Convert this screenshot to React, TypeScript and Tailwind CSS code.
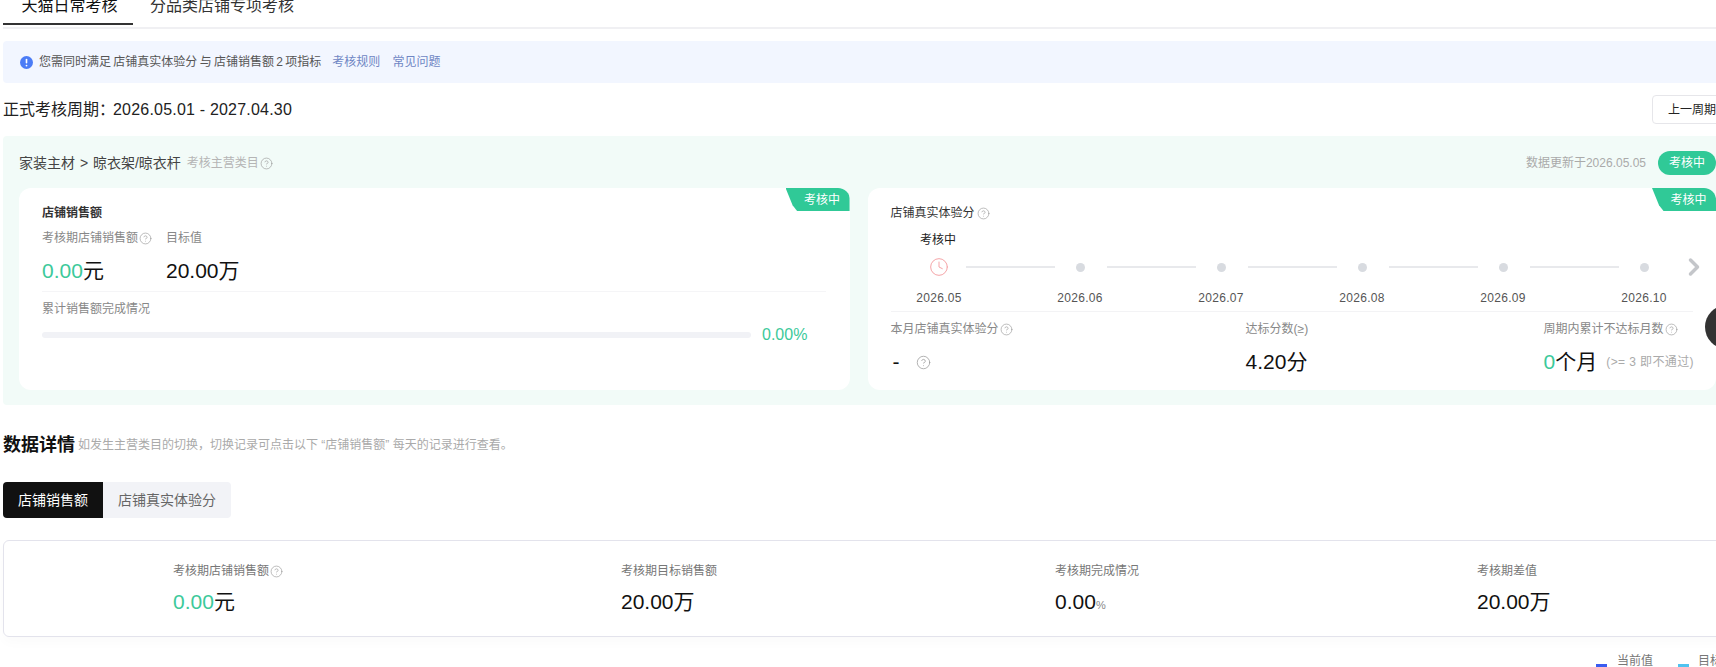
import { CircleHelp, Clock, ChevronRight } from "lucide-react";

const font = { fontFamily: '"Liberation Sans","Noto Sans CJK SC",sans-serif' };

function Help({ size = 13 }: { size?: number }) {
  return <CircleHelp size={size} strokeWidth={1.2} className="inline-block text-[#999] shrink-0" />;
}

function Tag() {
  return (
    <div className="absolute right-0 top-0 w-[64px] h-[23px] pl-[9px] flex items-center justify-center bg-[#30c997] text-white text-[12px] rounded-tr-[12px] [clip-path:polygon(0_0,100%_0,100%_100%,18%_100%,11%_75%)]">
      考核中
    </div>
  );
}

const months = ["2026.05", "2026.06", "2026.07", "2026.08", "2026.09", "2026.10"];

const summary = [
  { label: "考核期店铺销售额", help: true, w: "w-[109px]" },
  { label: "考核期目标销售额", w: "w-[95px]" },
  { label: "考核期完成情况", w: "w-[83px]" },
  { label: "考核期差值", w: "w-[72px]" },
];

export default function App() {
  return (
    <div className="w-[1716px] h-[667px] overflow-hidden bg-white relative" style={font}>
      <div className="w-[1732px] pl-[3px] text-[#111]">
        {/* top tabs */}
        <div className="h-[29px] border-b-2 border-[#f0f0f3] flex">
          <div className="w-[130px] h-[29px] border-b-2 border-[#333] flex justify-center text-[16px] leading-[24px] -mt-[6px] box-content">
            <span className="pl-[3px]">天猫日常考核</span>
          </div>
          <div className="ml-[17px] text-[16px] leading-[24px] -mt-[6px] text-[#333]">分品类店铺专项考核</div>
        </div>

        {/* alert */}
        <div className="mt-[12px] h-[42px] bg-[#f2f6ff] rounded-[4px] flex items-center pl-[17px] text-[12px]">
          <svg width="13" height="13" viewBox="0 0 13 13" className="shrink-0">
            <circle cx="6.5" cy="6.5" r="6.5" fill="#4b7cf6" />
            <rect x="5.7" y="2.8" width="1.6" height="4.8" rx="0.8" fill="#fff" />
            <circle cx="6.5" cy="9.6" r="0.9" fill="#fff" />
          </svg>
          <span className="ml-[6px] text-[#555] [word-spacing:-1px]">您需同时满足 店铺真实体验分 与 店铺销售额 2 项指标</span>
          <span className="ml-[11px] text-[#6f86c4]">考核规则</span>
          <span className="ml-[12px] text-[#6f86c4]">常见问题</span>
        </div>

        {/* period */}
        <div className="mt-[12px] h-[29px] flex items-center justify-between">
          <div className="text-[16px] text-[#222]">
            正式考核周期：<span className="-ml-[2px] tracking-[0.2px]">2026.05.01 - 2027.04.30</span>
          </div>
          <div className="w-[80px] h-[29px] border border-[#e6e6ea] rounded-[4px] bg-white text-[12px] text-[#222] flex items-center pl-[15px]">
            上一周期
          </div>
        </div>

        {/* green panel */}
        <div className="mt-[12px] h-[269px] bg-[#f2fbf8] rounded-[4px] px-[16px]">
          <div className="h-[52px] flex items-center justify-between pt-[2px]">
            <div className="flex items-center">
              <span className="text-[14px] text-[#444] [word-spacing:1px]">家装主材 &gt; 晾衣架/晾衣杆</span>
              <span className="ml-[6px] text-[12px] text-[#b5b5b5] mr-[1px]">考核主营类目</span>
              <Help />
            </div>
            <div className="flex items-center">
              <span className="text-[12px] text-[#aaa]">数据更新于2026.05.05</span>
              <span className="ml-[12px] w-[58px] h-[24px] rounded-full bg-[#30c997] text-white text-[12px] flex items-center justify-center">
                考核中
              </span>
            </div>
          </div>

          <div className="flex gap-[18px]">
            {/* left card */}
            <div className="relative w-[832px] h-[202px] bg-white rounded-[12px] px-[23px] pt-[17px]">
              <Tag />
              <div className="text-[12px] font-bold text-[#333] leading-[16px]">店铺销售额</div>
              <div className="mt-[9px] flex text-[12px] text-[#888] leading-[16px]">
                <div className="w-[124px] flex items-center gap-[1px]">
                  考核期店铺销售额 <Help />
                </div>
                <div>目标值</div>
              </div>
              <div className="mt-[11px] flex text-[21px] leading-[28px]">
                <div className="w-[124px]">
                  <span className="text-[#3cc99a]">0.00</span>元
                </div>
                <div>20.00万</div>
              </div>
              <div className="mt-[6px] w-[784px] border-t border-[#f5f5f7]" />
              <div className="mt-[9px] text-[12px] text-[#888] leading-[16px]">累计销售额完成情况</div>
              <div className="mt-[6px] flex items-center">
                <div className="w-[709px] h-[6px] rounded-full bg-[#f1f2f6]" />
                <span className="ml-[11px] text-[16px] text-[#3cc99a]">0.00%</span>
              </div>
            </div>

            {/* right card */}
            <div className="relative w-[850px] h-[202px] bg-white rounded-[12px] pt-[17px]">
              <div className="absolute right-0 top-0 w-[64px] h-[23px]">
                <Tag />
              </div>
              <div className="pl-[23px] text-[12px] text-[#333] leading-[16px] flex items-center gap-[2px]">
                店铺真实体验分 <Help />
              </div>
              <div className="mt-[11px] w-[141px] text-center text-[12px] text-[#222] leading-[16px]">考核中</div>
              <div className="mt-[8px] h-[22px] flex items-center">
                {months.map((m, i) => (
                  <div key={m} className={i === 0 ? "flex items-center ml-[46px]" : "flex items-center"}>
                    <div className="w-[50px] flex justify-center">
                      {i === 0 ? (
                        <Clock size={20} strokeWidth={1.2} className="text-[#f5a5a8]" />
                      ) : (
                        <span className="w-[9px] h-[9px] ml-[2px] rounded-full bg-[#d8dbe0]" />
                      )}
                    </div>
                    {i < 5 && <div className="ml-[2px] w-[89px] h-[2px] bg-[#e8e9ec]" />}
                  </div>
                ))}
                <ChevronRight size={28} strokeWidth={3} className="ml-[11px] text-[#c4c6ca] shrink-0" />
              </div>
              <div className="mt-[12px] ml-[1px] flex text-[12px] text-[#555] leading-[16px] tracking-[0.3px]">
                {months.map((m) => (
                  <div key={m} className="w-[141px] text-center">
                    {m}
                  </div>
                ))}
              </div>
              <div className="mt-[5px] ml-[23px] w-[802px] border-t border-[#f3f3f5]" />
              <div className="mt-[9px] ml-[23px] flex text-[12px] text-[#888] leading-[16px]">
                <div className="w-[355px] flex items-center gap-[1px]">
                  本月店铺真实体验分 <Help />
                </div>
                <div className="w-[298px]">达标分数(≥)</div>
                <div className="flex items-center gap-[1px]">
                  周期内累计不达标月数 <Help />
                </div>
              </div>
              <div className="mt-[11px] ml-[23px] flex items-center text-[21px] leading-[28px]">
                <div className="w-[355px] flex items-center">
                  <span className="ml-[2px]">-</span>
                  <span className="ml-[16px] flex">
                    <Help size={15} />
                  </span>
                </div>
                <div className="w-[298px]">4.20分</div>
                <div className="flex items-center whitespace-nowrap">
                  <span className="text-[#3cc99a]">0</span>个月
                  <span className="ml-[9px] text-[12px] text-[#aaa] tracking-[0.4px]">(&gt;= 3 即不通过)</span>
                </div>
              </div>
            </div>
          </div>
        </div>

        {/* details */}
        <div className="mt-[26px] flex items-center h-[28px]">
          <span className="text-[18px] font-bold text-[#111]">数据详情</span>
          <span className="ml-[3px] text-[12px] text-[#aaa]">如发生主营类目的切换，切换记录可点击以下 “店铺销售额” 每天的记录进行查看。</span>
        </div>

        <div className="mt-[23px] flex w-fit h-[36px] text-[14px] rounded-[4px] overflow-hidden">
          <div className="w-[100px] bg-[#111] text-white flex items-center justify-center">店铺销售额</div>
          <div className="w-[128px] bg-[#f2f3f7] text-[#666] flex items-center justify-center">店铺真实体验分</div>
        </div>

        <div className="mt-[22px] h-[97px] border border-[#e3e3ec] rounded-[6px] shadow-[0_6px_12px_rgba(0,0,0,0.02)] flex pl-[169px] pt-[22px] gap-[339px]">
          {summary.map((s, i) => (
            <div key={s.label} className={`${s.w} shrink-0`}>
              <div className="flex items-center gap-[1px] text-[12px] text-[#777] leading-[16px] whitespace-nowrap">
                {s.label}
                {s.help && <Help />}
              </div>
              <div className="mt-[9px] text-[21px] leading-[28px] whitespace-nowrap text-[#111]">
                {i === 0 && (
                  <>
                    <span className="text-[#3cc99a]">0.00</span>元
                  </>
                )}
                {(i === 1 || i === 3) && "20.00万"}
                {i === 2 && (
                  <>
                    0.00<span className="text-[11px] text-[#888]">%</span>
                  </>
                )}
              </div>
            </div>
          ))}
        </div>

        {/* legend, cut off by the bottom of the window */}
        <div className="mt-[16px] ml-[1593px] w-[200px] flex items-center text-[12px] text-[#777] leading-[16px] whitespace-nowrap">
          <span className="w-[11px] h-[4px] mt-[10px] bg-[#3a5cf0] shrink-0" />
          <span className="ml-[10px]">当前值</span>
          <span className="ml-[25px] w-[11px] h-[4px] mt-[10px] bg-[#4fc3f0] shrink-0" />
          <span className="ml-[9px]">目标值</span>
        </div>
      </div>

      {/* floating round button at the window edge */}
      <div className="absolute left-[1705px] top-[305px] w-[44px] h-[44px] rounded-full bg-[#333]" />
    </div>
  );
}
